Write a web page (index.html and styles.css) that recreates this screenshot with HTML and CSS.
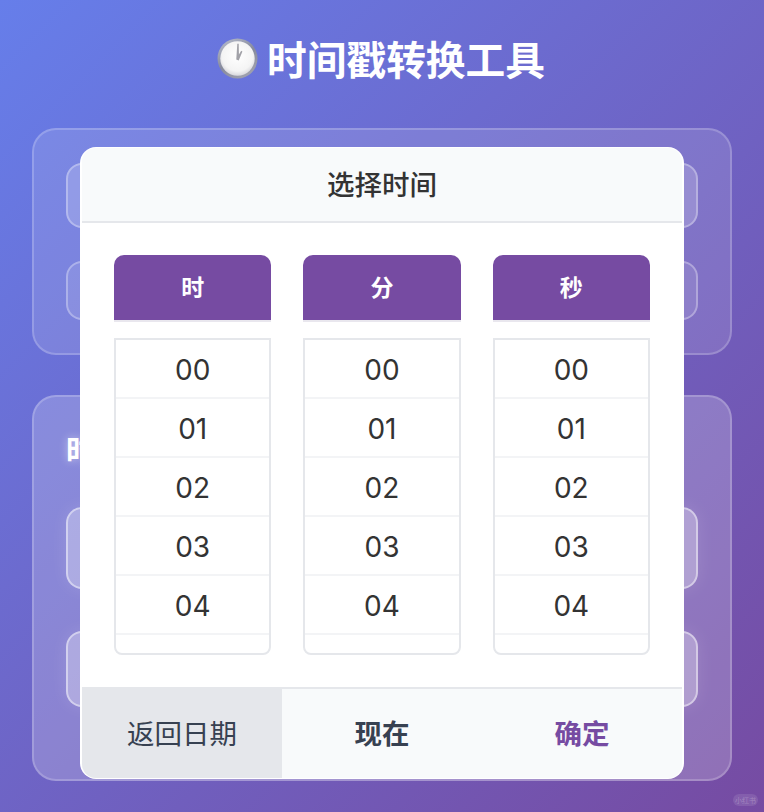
FILE: index.html
```html
<!DOCTYPE html>
<html lang="zh-CN">
<head>
<meta charset="utf-8">
<title>时间戳转换工具</title>
<link rel="stylesheet" href="styles.css">
</head>
<body>
<div class="page">
  <h1 class="title">
    <svg class="clock" viewBox="0 0 40 40" aria-hidden="true">
      <defs>
        <linearGradient id="rim" x1="0.2" y1="0" x2="0.8" y2="1">
          <stop offset="0" stop-color="#b4b9c9"/>
          <stop offset="0.5" stop-color="#868a9c"/>
          <stop offset="1" stop-color="#a4a5b0"/>
        </linearGradient>
        <radialGradient id="face" cx="0.5" cy="0.42" r="0.62">
          <stop offset="0" stop-color="#ffffff"/>
          <stop offset="0.72" stop-color="#f4f4f4"/>
          <stop offset="1" stop-color="#d0d0d6"/>
        </radialGradient>
      </defs>
      <circle cx="20" cy="20" r="19.5" fill="url(#rim)"/>
      <circle cx="20" cy="20" r="16.8" fill="url(#face)"/>
      <path d="M18.8 21 L19.8 5.5 L21.2 5.5 L21.4 16 L23.6 12.5 L24.8 13.2 L21.2 22 Z" fill="#a2a2a8"/>
    </svg>
    <span>时间戳转换工具</span>
  </h1>

  <section class="card card-top">
    <div class="field field-a"></div>
    <div class="field field-b"></div>
  </section>

  <section class="card card-bottom">
    <h2 class="card-label">时间戳</h2>
    <div class="field field-c"></div>
    <div class="field field-d"></div>
  </section>

  <div class="watermark">小红书</div>

  <div class="modal">
    <header class="modal-head">选择时间</header>
    <div class="columns">
      <div class="column">
        <div class="col-head">时</div>
        <ul class="list">
          <li>00</li><li>01</li><li>02</li><li>03</li><li>04</li><li></li>
        </ul>
      </div>
      <div class="column">
        <div class="col-head">分</div>
        <ul class="list">
          <li>00</li><li>01</li><li>02</li><li>03</li><li>04</li><li></li>
        </ul>
      </div>
      <div class="column">
        <div class="col-head">秒</div>
        <ul class="list">
          <li>00</li><li>01</li><li>02</li><li>03</li><li>04</li><li></li>
        </ul>
      </div>
    </div>
    <footer class="modal-foot">
      <button class="btn btn-back">返回日期</button>
      <button class="btn btn-now">现在</button>
      <button class="btn btn-ok">确定</button>
    </footer>
  </div>
</div>
</body>
</html>
```
FILE: styles.css
```css
* { box-sizing: border-box; }
html, body { margin: 0; padding: 0; }
body {
  width: 764px;
  height: 812px;
  overflow: hidden;
  font-family: Inter, "Noto Sans CJK SC", sans-serif;
}
.page {
  position: relative;
  width: 764px;
  height: 812px;
  padding: 30px 32px 0;
  background: linear-gradient(135deg, #667eea 0%, #764ba2 100%);
}
.title {
  margin: 0 0 42px;
  height: 56px;
  display: flex;
  align-items: center;
  justify-content: center;
  gap: 9px;
  color: #fff;
  font-family: "Noto Sans CJK SC", sans-serif;
  font-size: 39.7px;
  font-weight: 700;
  line-height: 56px;
}
.clock { width: 41px; height: 41px; flex: none; margin-left: -2px; }
.card {
  border: 2px solid rgba(255, 255, 255, 0.2);
  border-radius: 24px;
  background: rgba(255, 255, 255, 0.12);
  padding: 33px 32px;
}
.card-top { height: 227px; margin-bottom: 40px; }
.card-bottom {
  height: 386px;
  padding-top: 29px;
  background: rgba(255, 255, 255, 0.2);
}
.card-label {
  margin: 0 0 37px;
  color: #fff;
  font-family: "Noto Sans CJK SC", sans-serif;
  font-size: 30px;
  font-weight: 700;
  line-height: 44px;
  text-shadow: 0 0 8px rgba(255, 255, 255, 0.5);
}
.field {
  border: 2px solid rgba(255, 255, 255, 0.3);
  border-radius: 16px;
  background: rgba(255, 255, 255, 0.18);
}
.field-a { height: 65px; margin-bottom: 33px; }
.field-b { height: 59px; background: rgba(255, 255, 255, 0.1); }
.field-c,
.field-d {
  border-color: rgba(255, 255, 255, 0.45);
  background: rgba(255, 255, 255, 0.3);
  box-shadow: 0 0 18px rgba(255, 255, 255, 0.12);
}
.field-c { height: 82px; margin-bottom: 42px; }
.field-d { height: 76px; }
.watermark {
  position: absolute;
  left: 733px;
  top: 794px;
  width: 25px;
  height: 12px;
  border-radius: 6px;
  background: rgba(255, 255, 255, 0.1);
  color: rgba(255, 255, 255, 0.25);
  font-family: "Noto Sans CJK SC", sans-serif;
  font-size: 7px;
  line-height: 12px;
  text-align: center;
}
.modal {
  position: absolute;
  left: 80px;
  top: 147px;
  width: 604px;
  height: 632px;
  display: flex;
  flex-direction: column;
  padding: 1px 2px;
  border-radius: 16px;
  background: #fff;
  overflow: hidden;
}
.modal-head {
  height: 75px;
  flex: none;
  border-bottom: 2px solid #e5e7eb;
  border-radius: 14px 14px 0 0;
  background: #f8fafb;
  color: #333;
  font-family: "Noto Sans CJK SC", sans-serif;
  font-size: 27.5px;
  font-weight: 500;
  line-height: 71px;
  text-align: center;
}
.columns {
  flex: 1;
  display: grid;
  grid-template-columns: repeat(3, 1fr);
  gap: 32px;
  padding: 32px 32px 0;
}
.col-head {
  height: 67px;
  border-bottom: 2px solid #e9e7ee;
  border-radius: 10px 10px 0 0;
  background: #764ba2;
  color: #fff;
  font-family: "Noto Sans CJK SC", sans-serif;
  font-size: 23px;
  font-weight: 700;
  line-height: 62px;
  text-align: center;
}
.list {
  margin: 16px 0 0;
  padding: 0;
  height: 317px;
  list-style: none;
  border: 2px solid #e5e7eb;
  border-radius: 0 0 8px 8px;
  overflow: hidden;
}
.list li {
  height: 59px;
  border-bottom: 2px solid #f3f4f6;
  color: #333;
  font-size: 28px;
  line-height: 60px;
  text-align: center;
}
.modal-foot {
  height: 91px;
  flex: none;
  display: grid;
  grid-template-columns: repeat(3, 1fr);
  border-top: 2px solid #e5e7eb;
  border-radius: 0 0 14px 14px;
  background: #f8fafb;
  overflow: hidden;
}
.btn {
  border: 0;
  padding: 0 0 3px;
  background: transparent;
  color: #374151;
  font-family: "Noto Sans CJK SC", sans-serif;
  font-size: 27.5px;
  font-weight: 700;
}
.btn-back { background: #e5e7eb; font-weight: 400; margin-top: -2px; padding-bottom: 1px; }
.btn-ok { color: #764ba2; }
```
